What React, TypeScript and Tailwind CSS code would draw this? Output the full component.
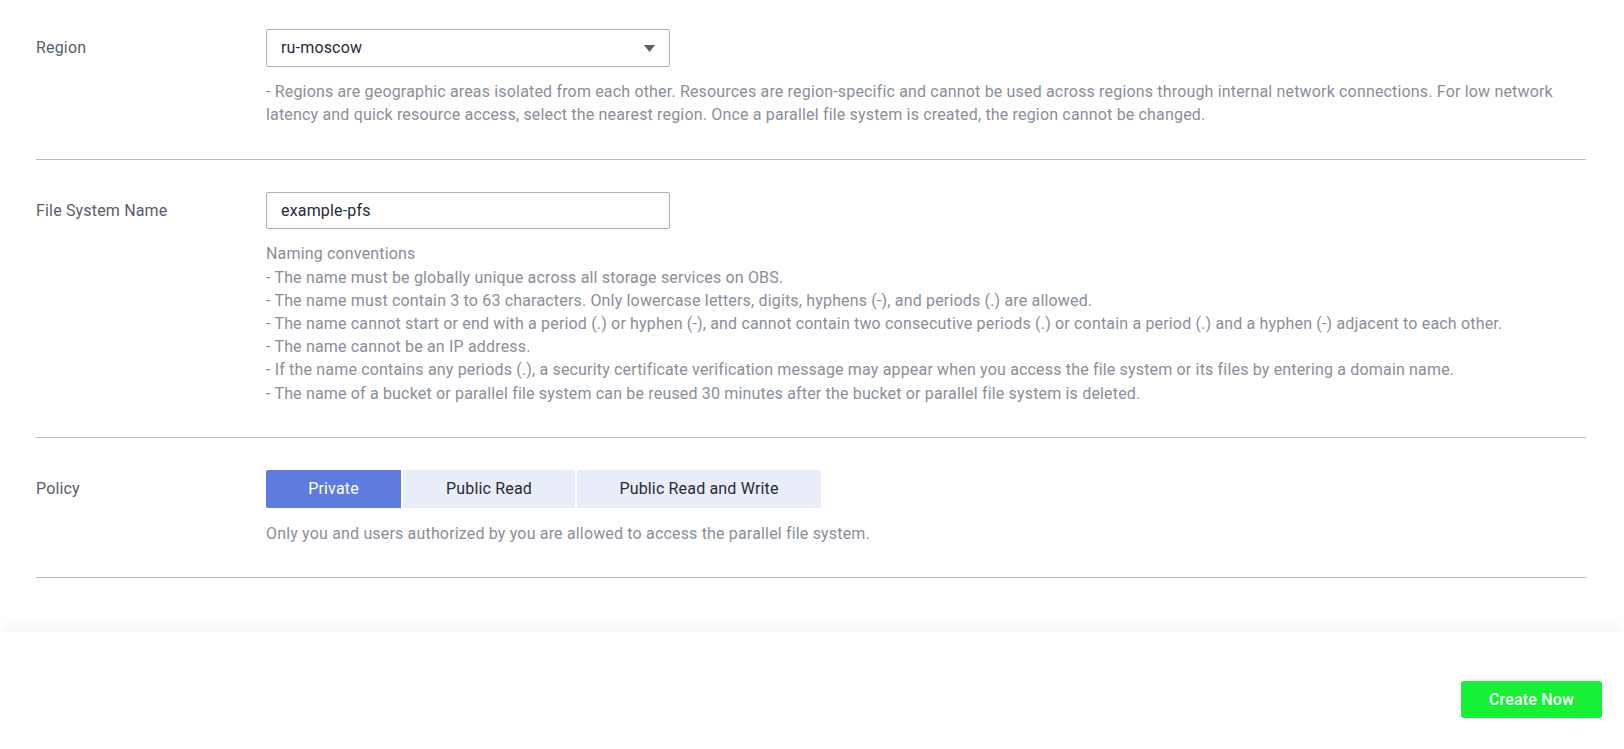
import React from "react";

const Label = ({ children }: { children: React.ReactNode }) => (
  <div className="w-[230px] shrink-0 text-[16px] leading-[38px] text-[#575d6c]">{children}</div>
);

export default function App() {
  const naming = [
    "Naming conventions",
    "- The name must be globally unique across all storage services on OBS.",
    "- The name must contain 3 to 63 characters. Only lowercase letters, digits, hyphens (-), and periods (.) are allowed.",
    "- The name cannot start or end with a period (.) or hyphen (-), and cannot contain two consecutive periods (.) or contain a period (.) and a hyphen (-) adjacent to each other.",
    "- The name cannot be an IP address.",
    "- If the name contains any periods (.), a security certificate verification message may appear when you access the file system or its files by entering a domain name.",
    "- The name of a bucket or parallel file system can be reused 30 minutes after the bucket or parallel file system is deleted.",
  ];
  return (
    <div className="min-h-[749px] w-full bg-white flex flex-col tracking-[0.17px]" style={{ fontFamily: "Roboto, 'Noto Sans', sans-serif" }}>
      <div className="pr-[38px] pl-[36px]">
        {/* Region */}
        <div className="flex pt-[29px] pb-[33px] border-b border-[#b9bcc3]">
          <Label>Region</Label>
          <div className="flex-1">
            <div className="w-[404px] h-[38px] border border-[#adb0b8] rounded-[2px] flex items-center justify-between pl-[14px] pr-[14px]">
              <span className="text-[16px] text-[#252b3a]">ru-moscow</span>
              <svg width="11" height="7" viewBox="0 0 11 7">
                <path d="M0 0 L11 0 L5.5 7 Z" fill="#575d6c" />
              </svg>
            </div>
            <p className="mt-[13px] text-[16px] leading-[23.2px] text-[#8a8e99]">
              - Regions are geographic areas isolated from each other. Resources are region-specific and cannot be used across regions through internal network connections. For low network latency and quick resource access, select the nearest region. Once a parallel file system is created, the region cannot be changed.
            </p>
          </div>
        </div>

        {/* File System Name */}
        <div className="flex pt-[32px] pb-[32px] border-b border-[#b9bcc3]">
          <Label>File System Name</Label>
          <div className="flex-1">
            <div className="w-[404px] h-[37px] border border-[#adb0b8] rounded-[2px] flex items-center pl-[14px]">
              <span className="text-[16px] text-[#252b3a]">example-pfs</span>
            </div>
            <div className="mt-[13px] text-[16px] leading-[23.2px] text-[#8a8e99]">
              {naming.map((l) => (
                <div key={l}>{l}</div>
              ))}
            </div>
          </div>
        </div>

        {/* Policy */}
        <div className="flex pt-[32px] pb-[32px] border-b border-[#b9bcc3]">
          <Label>Policy</Label>
          <div className="flex-1">
            <div className="flex gap-[2px] text-[16px]">
              <div className="w-[135px] h-[38px] rounded-l-[2px] bg-[#5e7ce0] text-white flex items-center justify-center">Private</div>
              <div className="w-[172px] h-[38px] bg-[#e9edf8] text-[#252b3a] flex items-center justify-center">Public Read</div>
              <div className="w-[244px] h-[38px] rounded-r-[2px] bg-[#e9edf8] text-[#252b3a] flex items-center justify-center">Public Read and Write</div>
            </div>
            <p className="mt-[14px] text-[16px] leading-[23.2px] text-[#8a8e99]">
              Only you and users authorized by you are allowed to access the parallel file system.
            </p>
          </div>
        </div>
      </div>

      <div className="h-[54px]" />

      <div className="h-[117px] bg-white shadow-[0_-6px_10px_rgba(0,0,0,0.04)] flex justify-end pt-[49px] pr-[22px]">
        <button className="w-[141px] h-[37px] rounded-[3px] bg-[#16f135] text-white text-[16px] font-medium">
          Create Now
        </button>
      </div>
    </div>
  );
}
